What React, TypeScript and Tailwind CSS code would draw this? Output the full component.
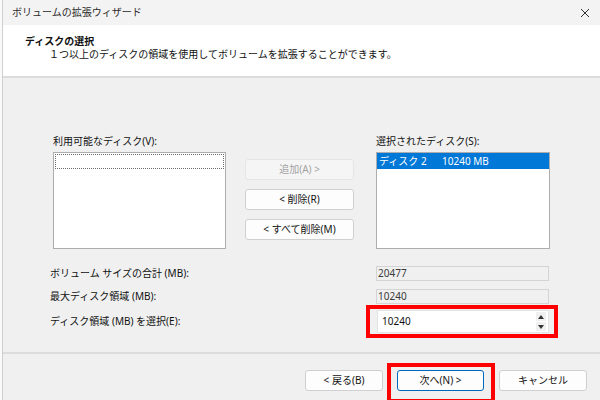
import React from "react";

const font = { fontFamily: '"Noto Sans", "Noto Sans CJK JP", sans-serif' };

function Btn({ children, disabled, primary }: { children: React.ReactNode; disabled?: boolean; primary?: boolean }) {
  return (
    <div
      className={
        "flex h-[21px] items-center justify-center rounded-[3px] border text-[10px] " +
        (disabled
          ? "border-[#e5e5e5] bg-[#f5f5f5] text-[#a3a3a3]"
          : primary
          ? "border-[#0067c0] bg-[#fdfdfd] text-[#111]"
          : "border-[#d0d0d0] bg-[#fdfdfd] text-[#111]")
      }
    >
      {children}
    </div>
  );
}

function ReadOnly({ value }: { value: string }) {
  return (
    <div className="flex h-[15px] w-[173px] items-center border border-[#d4d4d4] bg-[#f0f0f0] pl-[1px] text-[10px] text-[#3a3a3a]">
      {value}
    </div>
  );
}

export default function App() {
  return (
    <div className="flex h-[400px] w-[600px] overflow-hidden bg-[#f0f0f0] text-[#111]" style={font}>
      <div className="w-[2px] bg-[#fafafa]" />
      <div className="flex flex-1 flex-col border-l border-[#cfcfcf]">
        {/* title bar */}
        <div className="flex h-[25px] items-center justify-between bg-[#f3f3f3] pl-[9px] pr-[10px]">
          <span className="text-[10px] text-[#2b2b2b]">ボリュームの拡張ウィザード</span>
          <svg width="10" height="10" viewBox="0 0 10 10">
            <path d="M1 1L9 9M9 1L1 9" stroke="#333" strokeWidth="1" />
          </svg>
        </div>

        {/* header */}
        <div className="h-[53px] border-b-2 border-[#dcdcdc] bg-white pl-[22px] pt-[10px]">
          <div className="text-[10px] font-bold leading-[13px]">ディスクの選択</div>
          <div className="pl-[24px] text-[10px] leading-[13px]">１つ以上のディスクの領域を使用してボリュームを拡張することができます。</div>
        </div>

        {/* body */}
        <div className="flex h-[276px] flex-col border-b-2 border-[#dcdcdc] pl-[47px] pt-[56px]">
          <div className="flex">
            <div className="flex w-[176px] flex-col pl-[3px]">
              <div className="h-[18px] text-[10px] leading-[14px]">利用可能なディスク(V):</div>
              <div className="h-[97px] w-[173px] border-[1.5px] border-[#adadad] bg-white p-[1px]">
                <div className="h-[15px] border border-dotted border-[#6e6e6e]" />
              </div>
            </div>
            <div className="ml-[19px] flex w-[109px] flex-col gap-[9px] pt-[25px]">
              <Btn disabled>追加(A) &gt;</Btn>
              <Btn>&lt; 削除(R)</Btn>
              <Btn>&lt; すべて削除(M)</Btn>
            </div>
            <div className="ml-[22px] flex w-[174px] flex-col">
              <div className="h-[18px] text-[10px] leading-[14px]">選択されたディスク(S):</div>
              <div className="h-[97px] border-[1.5px] border-[#adadad] bg-white">
                <div className="flex h-[16px] items-center bg-[#0078d7] pl-[2px] text-[10px] text-white">
                  <span className="w-[63px]">ディスク 2</span>
                  <span>10240 MB</span>
                </div>
              </div>
            </div>
          </div>

          <div className="mt-[17px] flex flex-col">
            <div className="flex h-[15px] items-center">
              <span className="w-[326px] text-[10px]">ボリューム サイズの合計 (MB):</span>
              <ReadOnly value="20477" />
            </div>
            <div className="mt-[8px] flex h-[15px] items-center">
              <span className="w-[326px] text-[10px]">最大ディスク領域 (MB):</span>
              <ReadOnly value="10240" />
            </div>
            <div className="mt-[6px] flex h-[23px] items-center">
              <span className="w-[327px] text-[10px]">ディスク領域 (MB) を選択(E):</span>
              <div className="relative flex h-[23px] w-[172px] items-center border border-[#e3e3e3] bg-white">
                <span className="pl-[4px] text-[10px]">10240</span>
                <div className="ml-auto mr-[2px] flex h-[19px] w-[10px] flex-col gap-[1px]">
                  <div className="flex flex-1 items-center justify-center bg-[#f0f0f0]">
                    <svg width="6" height="4" viewBox="0 0 6 4"><path d="M3 0L6 4H0Z" fill="#333" /></svg>
                  </div>
                  <div className="flex flex-1 items-center justify-center bg-[#f0f0f0]">
                    <svg width="6" height="4" viewBox="0 0 6 4"><path d="M0 0H6L3 4Z" fill="#333" /></svg>
                  </div>
                </div>
                <span className="absolute -left-[12px] -right-[10px] -top-[6px] -bottom-[6px] border-4 border-[#f00]" />
              </div>
            </div>
          </div>
        </div>

        {/* footer */}
        <div className="flex pl-[302px] pt-[16px]">
          <div className="w-[78px]"><Btn>&lt; 戻る(B)</Btn></div>
          <div className="relative ml-[14px] w-[87px]">
            <Btn primary>次へ(N) &gt;</Btn>
            <span className="absolute -left-[10px] -right-[11px] -top-[7px] -bottom-[12px] border-4 border-[#f00]" />
          </div>
          <div className="ml-[15px] w-[88px]"><Btn>キャンセル</Btn></div>
        </div>
      </div>
    </div>
  );
}
